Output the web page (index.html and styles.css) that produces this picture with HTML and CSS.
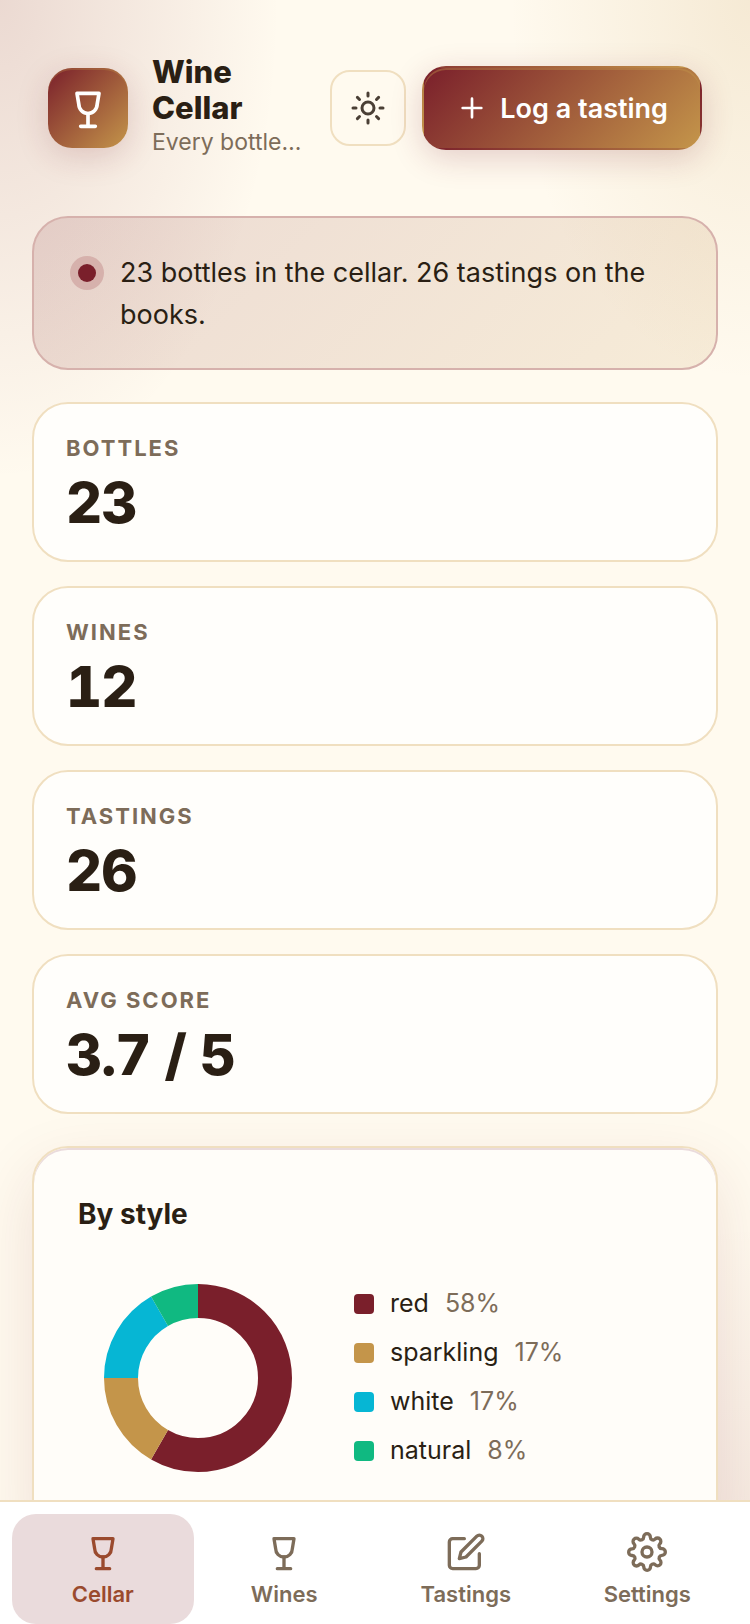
FILE: index.html
```html
<!DOCTYPE html>
<html lang="en">
<head>
<meta charset="utf-8">
<meta name="viewport" content="width=device-width, initial-scale=1">
<title>Wine Cellar</title>
<link rel="stylesheet" href="styles.css">
</head>
<body>
<header class="topbar">
  <div class="logo">
    <svg class="icon" viewBox="0 0 24 24"><path d="M6 4h12l-1 6a5 5 0 0 1-10 0z"/><path d="M12 15v7M8 22h8"/></svg>
  </div>
  <div class="brand">
    <h1>Wine Cellar</h1>
    <p>Every bottle…</p>
  </div>
  <div class="actions">
    <button class="theme-btn" aria-label="Toggle theme">
      <svg class="icon" viewBox="0 0 24 24"><circle cx="12" cy="12" r="4"/><path d="M12 2v2M12 20v2M4.93 4.93l1.41 1.41M17.66 17.66l1.41 1.41M2 12h2M20 12h2M6.34 17.66l-1.41 1.41M19.07 4.93l-1.41 1.41"/></svg>
    </button>
    <button class="primary-btn">
      <svg class="icon" viewBox="0 0 24 24"><path d="M12 5v14M5 12h14"/></svg>
      Log a tasting
    </button>
  </div>
</header>

<main>
  <section class="banner">
    <span class="dot"></span>
    <p>23 bottles in the cellar. 26 tastings on the books.</p>
  </section>

  <section class="stats">
    <div class="stat">
      <div class="stat-label">Bottles</div>
      <div class="stat-value">23</div>
    </div>
    <div class="stat">
      <div class="stat-label">Wines</div>
      <div class="stat-value">12</div>
    </div>
    <div class="stat">
      <div class="stat-label">Tastings</div>
      <div class="stat-value">26</div>
    </div>
    <div class="stat">
      <div class="stat-label">Avg score</div>
      <div class="stat-value">3.7 / 5</div>
    </div>
  </section>

  <section class="panel">
    <h2>By style</h2>
    <div class="chart">
      <svg class="donut" viewBox="0 0 240 240">
        <g transform="rotate(-90 120 120)">
          <circle class="seg red" cx="120" cy="120" r="77" pathLength="12" stroke-dasharray="7 5"/>
          <circle class="seg sparkling" cx="120" cy="120" r="77" pathLength="12" stroke-dasharray="2 10" stroke-dashoffset="-7"/>
          <circle class="seg white" cx="120" cy="120" r="77" pathLength="12" stroke-dasharray="2 10" stroke-dashoffset="-9"/>
          <circle class="seg natural" cx="120" cy="120" r="77" pathLength="12" stroke-dasharray="1 11" stroke-dashoffset="-11"/>
        </g>
      </svg>
      <ul class="legend">
        <li><span class="swatch red"></span>red <span class="pct">58%</span></li>
        <li><span class="swatch sparkling"></span>sparkling <span class="pct">17%</span></li>
        <li><span class="swatch white"></span>white <span class="pct">17%</span></li>
        <li><span class="swatch natural"></span>natural <span class="pct">8%</span></li>
      </ul>
    </div>
  </section>
</main>

<nav class="tabs">
  <a class="tab active" href="#cellar">
    <svg class="icon" viewBox="0 0 24 24"><path d="M6 4h12l-1 6a5 5 0 0 1-10 0z"/><path d="M12 15v7M8 22h8"/></svg>
    Cellar
  </a>
  <a class="tab" href="#wines">
    <svg class="icon" viewBox="0 0 24 24"><path d="M6 4h12l-1 6a5 5 0 0 1-10 0z"/><path d="M12 15v7M8 22h8"/></svg>
    Wines
  </a>
  <a class="tab" href="#tastings">
    <svg class="icon" viewBox="0 0 24 24"><path d="M11 4H4a2 2 0 0 0-2 2v14a2 2 0 0 0 2 2h14a2 2 0 0 0 2-2v-7"/><path d="M18.5 2.5a2.121 2.121 0 0 1 3 3L12 15l-4 1 1-4 9.5-9.5z"/></svg>
    Tastings
  </a>
  <a class="tab" href="#settings">
    <svg class="icon" viewBox="0 0 24 24"><circle cx="12" cy="12" r="3"/><path d="M19.4 15a1.65 1.65 0 0 0 .33 1.82l.06.06a2 2 0 1 1-2.83 2.83l-.06-.06a1.65 1.65 0 0 0-1.82-.33 1.65 1.65 0 0 0-1 1.51V21a2 2 0 0 1-4 0v-.09A1.65 1.65 0 0 0 9 19.4a1.65 1.65 0 0 0-1.82.33l-.06.06a2 2 0 1 1-2.83-2.83l.06-.06a1.65 1.65 0 0 0 .33-1.82 1.65 1.65 0 0 0-1.51-1H3a2 2 0 0 1 0-4h.09A1.65 1.65 0 0 0 4.6 9a1.65 1.65 0 0 0-.33-1.82l-.06-.06a2 2 0 1 1 2.83-2.83l.06.06a1.65 1.65 0 0 0 1.82.33H9a1.65 1.65 0 0 0 1-1.51V3a2 2 0 0 1 4 0v.09a1.65 1.65 0 0 0 1 1.51 1.65 1.65 0 0 0 1.82-.33l.06-.06a2 2 0 1 1 2.83 2.83l-.06.06a1.65 1.65 0 0 0-.33 1.82V9a1.65 1.65 0 0 0 1.51 1H21a2 2 0 0 1 0 4h-.09a1.65 1.65 0 0 0-1.51 1z"/></svg>
    Settings
  </a>
</nav>
</body>
</html>
```

FILE: styles.css
```css
:root {
  --wine: #7a1f2b;
  --gold: #c4954a;
  --cyan: #06b6d4;
  --green: #10b981;
  --ink: #2a1f14;
  --muted: #7d6c59;
  --line: #f0dfc0;
}

* {
  box-sizing: border-box;
}

body {
  margin: 0;
  min-height: 100vh;
  padding: 0 32px 64px;
  font-family: Inter, "Liberation Sans", sans-serif;
  font-size: 27px;
  color: var(--ink);
  background:
    radial-gradient(280px 480px at 0 0, rgba(122, 31, 43, 0.15), transparent),
    radial-gradient(240px 380px at 100% 0, rgba(196, 149, 74, 0.16), transparent),
    radial-gradient(260px 400px at 100% 100%, rgba(122, 31, 43, 0.1), transparent),
    #fffaef;
  background-attachment: fixed;
}

h1, h2, p, ul {
  margin: 0;
  padding: 0;
}

.icon {
  display: block;
  flex: none;
  fill: none;
  stroke: currentColor;
  stroke-width: 2;
  stroke-linecap: round;
  stroke-linejoin: round;
}

/* header */
.topbar {
  display: flex;
  align-items: center;
  gap: 24px;
  padding: 54px 16px;
}

.logo {
  display: flex;
  align-items: center;
  justify-content: center;
  flex: none;
  width: 80px;
  height: 80px;
  border-radius: 24px;
  color: #fff;
  background: linear-gradient(135deg, var(--wine), var(--gold));
  box-shadow: 0 8px 32px rgba(122, 31, 43, 0.18), inset 0 2px 0 rgba(196, 149, 74, 0.3);
}

.logo .icon {
  width: 44px;
  height: 44px;
}

.brand {
  flex: 1;
  min-width: 0;
  padding-bottom: 4px;
}

.brand h1 {
  font-size: 31px;
  line-height: 36px;
  font-weight: 800;
}

.brand p {
  overflow: hidden;
  font-size: 23px;
  line-height: 32px;
  white-space: nowrap;
  text-overflow: ellipsis;
  color: var(--muted);
}

.actions {
  display: flex;
  align-items: center;
  gap: 16px;
}

button {
  font-family: inherit;
  cursor: pointer;
}

.theme-btn {
  display: flex;
  align-items: center;
  justify-content: center;
  width: 76px;
  height: 76px;
  padding: 0;
  border: 2px solid var(--line);
  border-radius: 20px;
  color: #4a3f35;
  background: transparent;
}

.theme-btn .icon {
  width: 36px;
  height: 36px;
}

.primary-btn {
  display: flex;
  align-items: center;
  gap: 12px;
  height: 84px;
  padding: 0 32px;
  border: 2px solid transparent;
  border-radius: 24px;
  font-size: 27px;
  font-weight: 600;
  color: #fff;
  background: linear-gradient(135deg, var(--wine), var(--gold));
  box-shadow: 0 8px 32px rgba(122, 31, 43, 0.2), inset 0 2px 0 rgba(196, 149, 74, 0.4);
}

.primary-btn .icon {
  width: 32px;
  height: 32px;
}

/* content */
main {
  display: flex;
  flex-direction: column;
  gap: 32px;
}

.banner {
  display: flex;
  align-items: flex-start;
  gap: 24px;
  padding: 34px 44px 32px;
  border: 2px solid #d6b1ac;
  border-radius: 36px;
  line-height: 42px;
  background: linear-gradient(135deg, rgba(122, 31, 43, 0.14), rgba(196, 149, 74, 0.14));
}

.dot {
  flex: none;
  width: 18px;
  height: 18px;
  margin-top: 12px;
  border-radius: 50%;
  background: var(--wine);
  box-shadow: 0 0 0 8px #d6b1ac;
}

.stats {
  display: grid;
  gap: 24px;
}

.stat {
  height: 160px;
  padding: 28px 32px;
  border: 2px solid var(--line);
  border-radius: 36px;
  background: #fffefb;
}

.stat-label {
  font-size: 22px;
  line-height: 32px;
  font-weight: 700;
  letter-spacing: 2px;
  text-transform: uppercase;
  color: var(--muted);
}

.stat-value {
  font-size: 56px;
  line-height: 78px;
  font-weight: 800;
  letter-spacing: -1px;
  font-variant-numeric: tabular-nums;
}

.panel {
  padding: 44px;
  border: 2px solid var(--line);
  border-radius: 36px;
  background: #fffdf9;
  box-shadow: 0 24px 64px rgba(122, 31, 43, 0.12), inset 0 2px 0 #eadbdc;
}

.panel h2 {
  margin-bottom: 22px;
  font-size: 28px;
  line-height: 44px;
  font-weight: 700;
}

.chart {
  display: flex;
  align-items: center;
  gap: 36px;
}

.donut {
  flex: none;
  width: 240px;
  height: 240px;
}

.seg {
  fill: none;
  stroke-width: 34;
}

.seg.red { stroke: var(--wine); }
.seg.sparkling { stroke: var(--gold); }
.seg.white { stroke: var(--cyan); }
.seg.natural { stroke: var(--green); }

.legend {
  display: grid;
  gap: 12px;
  padding-bottom: 2px;
  list-style: none;
  font-size: 25px;
  line-height: 37px;
}

.legend li {
  display: flex;
  align-items: center;
  gap: 16px;
}

.swatch {
  width: 20px;
  height: 20px;
  border-radius: 4px;
}

.swatch.red { background: var(--wine); }
.swatch.sparkling { background: var(--gold); }
.swatch.white { background: var(--cyan); }
.swatch.natural { background: var(--green); }

.pct {
  color: var(--muted);
}

/* bottom tabs */
.tabs {
  position: fixed;
  left: 0;
  right: 0;
  bottom: 0;
  display: flex;
  padding: 12px 12px 0;
  border-top: 2px solid var(--line);
  background: #fff;
}

.tab {
  display: flex;
  flex: 1;
  flex-direction: column;
  align-items: center;
  gap: 8px;
  height: 110px;
  padding-top: 18px;
  border-radius: 24px;
  font-size: 22px;
  line-height: 28px;
  font-weight: 600;
  text-decoration: none;
  color: var(--muted);
}

.tab .icon {
  width: 40px;
  height: 40px;
}

.tab.active {
  color: #9a4a2e;
  background: #eadbdc;
}
```
